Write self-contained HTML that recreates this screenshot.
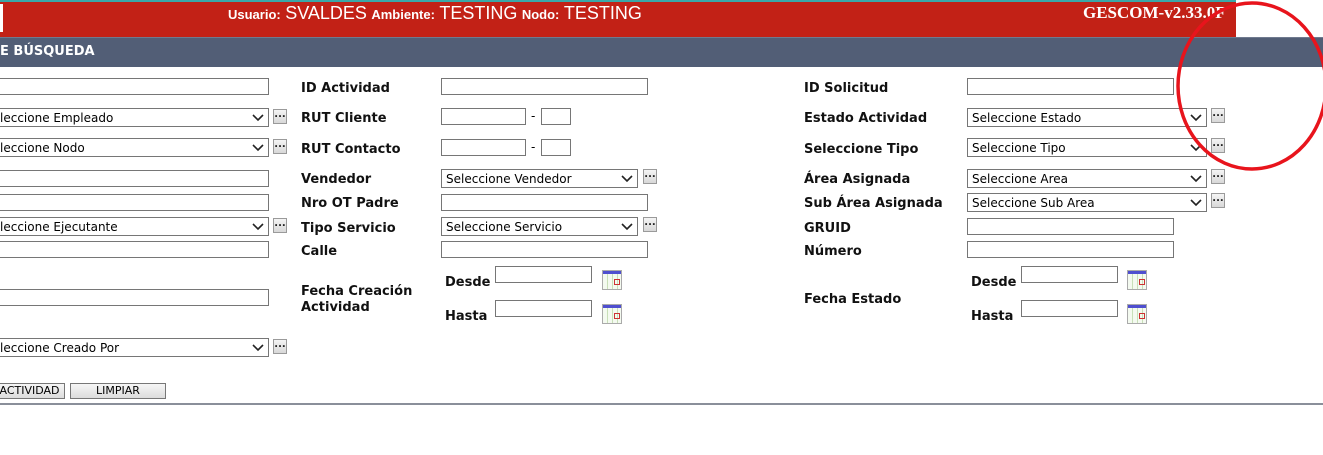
<!DOCTYPE html>
<html><head><meta charset="utf-8"><style>
*{margin:0;padding:0;box-sizing:border-box}
body{width:1323px;height:455px;background:#fff;position:relative;overflow:hidden;font-family:"DejaVu Sans","Liberation Sans",sans-serif}
.a{position:absolute}
.top{left:0;top:0;width:1236px;height:37px;background:#c22116;border-top:2px solid #3aa7a8}
.nav{left:0;top:37px;width:1323px;height:30px;background:#525e76;border-top:1px solid #6f7a8f}
.i{position:absolute;height:17px;border:1px solid #767676;background:#fff}
.s{position:absolute;height:19px;border:1px solid #767676;background:#fff;font-size:12px;line-height:18px;color:#000;overflow:hidden;white-space:nowrap}
.s span{position:absolute;left:4px;top:0}
.s svg{position:absolute;right:4px;top:5px}
.b{position:absolute;width:14px;height:15px;border:1px solid #9a9a9a;background:linear-gradient(#f4f4f4,#d8d8d8);font-size:10px;line-height:10px;text-align:center;color:#222;font-weight:bold}
.l{position:absolute;font-size:13px;font-weight:bold;color:#111;white-space:nowrap}
.cal{position:absolute;width:20px;height:20px;border:1px solid #aaa;background:repeating-linear-gradient(90deg,#f4faf0 0 4px,#c8dfb8 4px 5px),#f4faf0}
.cal:before{content:"";position:absolute;left:0;top:0;width:18px;height:3px;background:#4f4fcf}
.cal:after{content:"";position:absolute;left:11px;top:8px;width:4px;height:4px;border:1px solid #c33}
.btn{position:absolute;height:16px;border:1px solid #777;background:linear-gradient(#f6f6f6,#dcdcdc);font-size:11px;line-height:14px;text-align:center}
</style></head><body>
<div class="a top"></div>
<div class="a" style="left:0;top:4px;width:3px;height:28px;background:#fff"></div>
<div class="a" style="left:228px;top:3px;color:#fff;white-space:nowrap;font-family:'Liberation Sans',sans-serif"><b style="font-size:13px">Usuario:</b> <span style="font-size:18px">SVALDES</span> <b style="font-size:13px">Ambiente:</b> <span style="font-size:18px">TESTING</span> <b style="font-size:13px">Nodo:</b> <span style="font-size:18px">TESTING</span></div>
<div class="a" style="left:1083px;top:3px;color:#fff;font:bold 17px 'Liberation Serif',serif">GESCOM-v2.33.0F</div>
<div class="a nav"></div>
<div class="a" style="left:0;top:44px;color:#fff;font-size:13px;font-weight:bold">E BÚSQUEDA</div>

<!-- left column -->
<div class="i" style="left:-2px;top:78px;width:271px"></div>
<div class="s" style="left:-2px;top:108px;width:271px"><span style="left:-14px">Seleccione Empleado</span><svg width="12" height="8"><path d="M1 1l5 5 5-5" stroke="#222" stroke-width="1.6" fill="none"/></svg></div>
<div class="b" style="left:273px;top:109px">...</div>
<div class="s" style="left:-2px;top:138px;width:271px"><span style="left:-14px">Seleccione Nodo</span><svg width="12" height="8"><path d="M1 1l5 5 5-5" stroke="#222" stroke-width="1.6" fill="none"/></svg></div>
<div class="b" style="left:273px;top:139px">...</div>
<div class="i" style="left:-2px;top:170px;width:271px"></div>
<div class="i" style="left:-2px;top:194px;width:271px"></div>
<div class="s" style="left:-2px;top:217px;width:271px"><span style="left:-14px">Seleccione Ejecutante</span><svg width="12" height="8"><path d="M1 1l5 5 5-5" stroke="#222" stroke-width="1.6" fill="none"/></svg></div>
<div class="b" style="left:273px;top:218px">...</div>
<div class="i" style="left:-2px;top:241px;width:271px"></div>
<div class="i" style="left:-2px;top:289px;width:271px"></div>
<div class="s" style="left:-2px;top:338px;width:271px"><span style="left:-14px">Seleccione Creado Por</span><svg width="12" height="8"><path d="M1 1l5 5 5-5" stroke="#222" stroke-width="1.6" fill="none"/></svg></div>
<div class="b" style="left:273px;top:339px">...</div>
<div class="btn" style="left:-6px;top:383px;width:71px">ACTIVIDAD</div>
<div class="btn" style="left:70px;top:383px;width:96px">LIMPIAR</div>
<div class="a" style="left:0;top:403px;width:1323px;height:2px;background:#8a8f9a"></div>

<!-- middle -->
<div class="l" style="left:301px;top:81px">ID Actividad</div>
<div class="i" style="left:441px;top:78px;width:207px"></div>
<div class="l" style="left:301px;top:111px">RUT Cliente</div>
<div class="i" style="left:441px;top:108px;width:85px"></div><div class="a" style="left:531px;top:109px;font-size:12px">-</div><div class="i" style="left:541px;top:108px;width:30px"></div>
<div class="l" style="left:301px;top:142px">RUT Contacto</div>
<div class="i" style="left:441px;top:139px;width:85px"></div><div class="a" style="left:531px;top:140px;font-size:12px">-</div><div class="i" style="left:541px;top:139px;width:30px"></div>
<div class="l" style="left:301px;top:172px">Vendedor</div>
<div class="s" style="left:441px;top:169px;width:197px"><span>Seleccione Vendedor</span><svg width="12" height="8"><path d="M1 1l5 5 5-5" stroke="#222" stroke-width="1.6" fill="none"/></svg></div>
<div class="b" style="left:643px;top:169px">...</div>
<div class="l" style="left:301px;top:196px">Nro OT Padre</div>
<div class="i" style="left:441px;top:194px;width:207px"></div>
<div class="l" style="left:301px;top:221px">Tipo Servicio</div>
<div class="s" style="left:441px;top:217px;width:197px"><span>Seleccione Servicio</span><svg width="12" height="8"><path d="M1 1l5 5 5-5" stroke="#222" stroke-width="1.6" fill="none"/></svg></div>
<div class="b" style="left:643px;top:217px">...</div>
<div class="l" style="left:301px;top:244px">Calle</div>
<div class="i" style="left:441px;top:241px;width:207px"></div>
<div class="l" style="left:301px;top:284px;line-height:16px">Fecha Creación<br>Actividad</div>
<div class="l" style="left:445px;top:275px">Desde</div>
<div class="i" style="left:495px;top:266px;width:97px"></div>
<div class="cal" style="left:602px;top:270px"></div>
<div class="l" style="left:445px;top:309px">Hasta</div>
<div class="i" style="left:495px;top:300px;width:97px"></div>
<div class="cal" style="left:602px;top:304px"></div>

<!-- right -->
<div class="l" style="left:804px;top:81px">ID Solicitud</div>
<div class="i" style="left:967px;top:78px;width:207px"></div>
<div class="l" style="left:804px;top:111px">Estado Actividad</div>
<div class="s" style="left:967px;top:108px;width:240px"><span>Seleccione Estado</span><svg width="12" height="8"><path d="M1 1l5 5 5-5" stroke="#222" stroke-width="1.6" fill="none"/></svg></div>
<div class="b" style="left:1211px;top:108px">...</div>
<div class="l" style="left:804px;top:142px">Seleccione Tipo</div>
<div class="s" style="left:967px;top:138px;width:240px"><span>Seleccione Tipo</span><svg width="12" height="8"><path d="M1 1l5 5 5-5" stroke="#222" stroke-width="1.6" fill="none"/></svg></div>
<div class="b" style="left:1211px;top:138px">...</div>
<div class="l" style="left:804px;top:172px">Área Asignada</div>
<div class="s" style="left:967px;top:169px;width:240px"><span>Seleccione Area</span><svg width="12" height="8"><path d="M1 1l5 5 5-5" stroke="#222" stroke-width="1.6" fill="none"/></svg></div>
<div class="b" style="left:1211px;top:169px">...</div>
<div class="l" style="left:804px;top:196px">Sub Área Asignada</div>
<div class="s" style="left:967px;top:193px;width:240px"><span>Seleccione Sub Area</span><svg width="12" height="8"><path d="M1 1l5 5 5-5" stroke="#222" stroke-width="1.6" fill="none"/></svg></div>
<div class="b" style="left:1211px;top:193px">...</div>
<div class="l" style="left:804px;top:221px">GRUID</div>
<div class="i" style="left:967px;top:218px;width:207px"></div>
<div class="l" style="left:804px;top:244px">Número</div>
<div class="i" style="left:967px;top:241px;width:207px"></div>
<div class="l" style="left:804px;top:292px">Fecha Estado</div>
<div class="l" style="left:971px;top:275px">Desde</div>
<div class="i" style="left:1021px;top:266px;width:97px"></div>
<div class="cal" style="left:1127px;top:270px"></div>
<div class="l" style="left:971px;top:309px">Hasta</div>
<div class="i" style="left:1021px;top:300px;width:97px"></div>
<div class="cal" style="left:1127px;top:304px"></div>

<svg class="a" style="left:0;top:0" width="1323" height="455"><ellipse cx="1252" cy="86" rx="74" ry="83" fill="none" stroke="#e8141c" stroke-width="3.5"/></svg>
</body></html>
